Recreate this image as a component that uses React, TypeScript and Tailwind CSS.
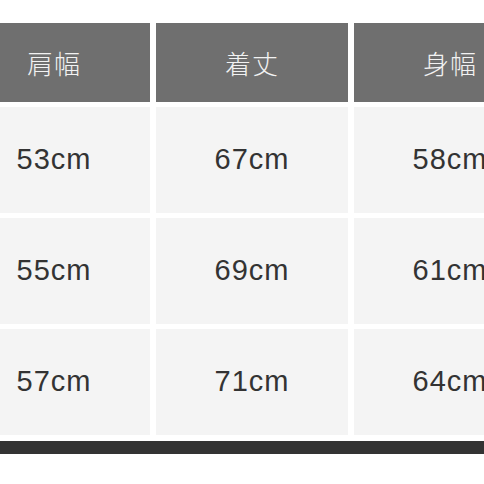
import React from "react";

const headers = ["肩幅", "着丈", "身幅"];
const rows = [
  ["53cm", "67cm", "58cm"],
  ["55cm", "69cm", "61cm"],
  ["57cm", "71cm", "64cm"],
];

export default function App() {
  return (
    <div className="w-[484px] h-[484px] overflow-hidden bg-white" style={{ fontFamily: '"Liberation Sans", "Noto Sans CJK JP", sans-serif' }}>
      <div className="pt-[23px] ml-[-42px] w-[600px]">
        <div className="grid grid-cols-[192px_192px_192px] gap-[6px]">
          {headers.map((h) => (
            <div key={h} className="h-[79px] bg-[#6f6f6f] flex items-center justify-center text-[#f2f2f2] text-[26px] tracking-[1px]" style={{ fontFamily: '"Noto Sans CJK JP", sans-serif', fontWeight: 300 }}>
              {h}
            </div>
          ))}
        </div>
        <div className="mt-[5px] flex flex-col gap-[5px]">
          {rows.map((r, i) => (
            <div key={i} className="grid grid-cols-[192px_192px_192px] gap-[6px]">
              {r.map((c, j) => (
                <div key={j} className="h-[106px] bg-[#f4f4f4] flex items-center justify-center text-[#333333] text-[29px] tracking-[1px]">
                  {c}
                </div>
              ))}
            </div>
          ))}
        </div>
        <div className="mt-[6px] h-[13px] bg-[#333333]" />
      </div>
    </div>
  );
}
